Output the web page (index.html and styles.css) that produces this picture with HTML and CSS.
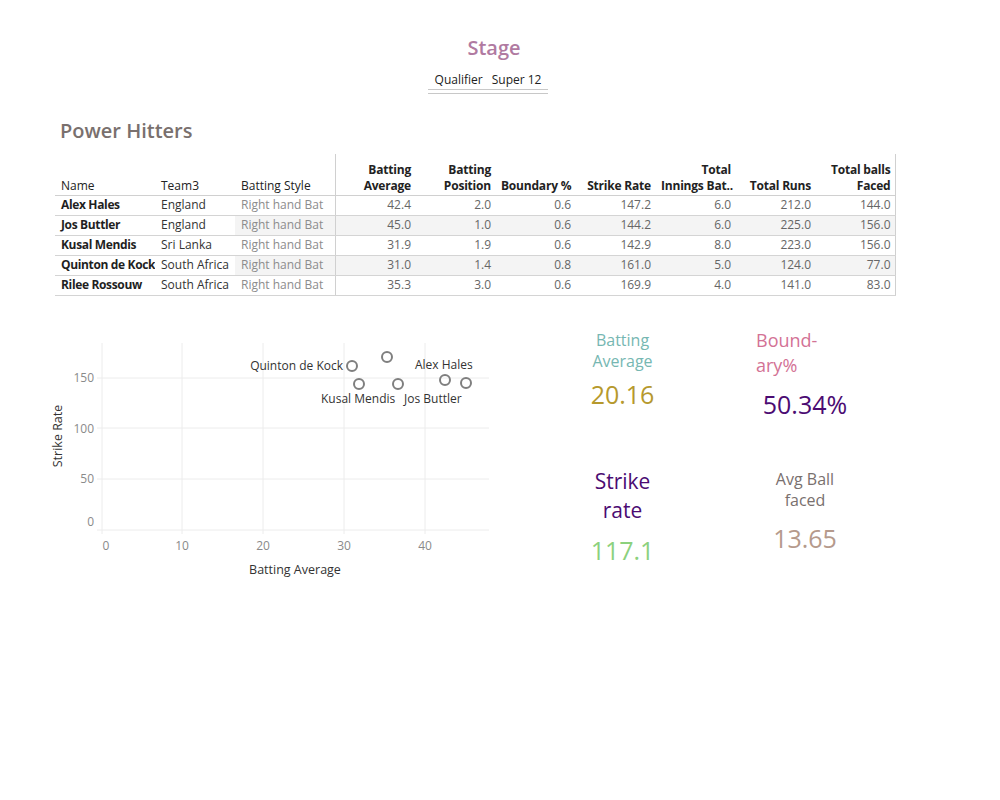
FILE: index.html
```html
<!DOCTYPE html>
<html>
<head>
<meta charset="utf-8">
<link rel="stylesheet" href="styles.css">
</head>
<body>
<div class="page">
  <section class="stage">
    <div class="stage-title">Stage</div>
    <div class="stage-filter">
      <div class="filter-items"><span>Qualifier</span><span>Super 12</span></div>
      <div class="filter-lines"></div>
    </div>
  </section>

  <section class="hitters">
    <h1 class="hitters-title">Power Hitters</h1>
    <table class="grid">
      <colgroup>
        <col class="c-name"><col class="c-team"><col class="c-style">
        <col class="c-num"><col class="c-num"><col class="c-num"><col class="c-num"><col class="c-num"><col class="c-num"><col class="c-num">
      </colgroup>
      <thead>
        <tr>
          <th class="dim">Name</th>
          <th class="dim">Team3</th>
          <th class="dim sep">Batting Style</th>
          <th class="num">Batting<br>Average</th>
          <th class="num">Batting<br>Position</th>
          <th class="num">Boundary %</th>
          <th class="num">Strike Rate</th>
          <th class="num">Total<br>Innings Bat..</th>
          <th class="num">Total Runs</th>
          <th class="num last">Total balls<br>Faced</th>
        </tr>
      </thead>
      <tbody>
        <tr>
          <td class="name">Alex Hales</td><td class="team">England</td><td class="style sep">Right hand Bat</td>
          <td class="num">42.4</td><td class="num">2.0</td><td class="num">0.6</td><td class="num">147.2</td><td class="num">6.0</td><td class="num">212.0</td><td class="num last">144.0</td>
        </tr>
        <tr class="alt">
          <td class="name">Jos Buttler</td><td class="team">England</td><td class="style sep">Right hand Bat</td>
          <td class="num">45.0</td><td class="num">1.0</td><td class="num">0.6</td><td class="num">144.2</td><td class="num">6.0</td><td class="num">225.0</td><td class="num last">156.0</td>
        </tr>
        <tr>
          <td class="name">Kusal Mendis</td><td class="team">Sri Lanka</td><td class="style sep">Right hand Bat</td>
          <td class="num">31.9</td><td class="num">1.9</td><td class="num">0.6</td><td class="num">142.9</td><td class="num">8.0</td><td class="num">223.0</td><td class="num last">156.0</td>
        </tr>
        <tr class="alt">
          <td class="name">Quinton de Kock</td><td class="team">South Africa</td><td class="style sep">Right hand Bat</td>
          <td class="num">31.0</td><td class="num">1.4</td><td class="num">0.8</td><td class="num">161.0</td><td class="num">5.0</td><td class="num">124.0</td><td class="num last">77.0</td>
        </tr>
        <tr>
          <td class="name">Rilee Rossouw</td><td class="team">South Africa</td><td class="style sep">Right hand Bat</td>
          <td class="num">35.3</td><td class="num">3.0</td><td class="num">0.6</td><td class="num">169.9</td><td class="num">4.0</td><td class="num">141.0</td><td class="num last">83.0</td>
        </tr>
      </tbody>
    </table>
  </section>

  <section class="bottom">
    <svg class="scatter" width="460" height="250" viewBox="0 0 460 250">
      <g class="gridlines">
        <line x1="57" y1="42" x2="449" y2="42"/>
        <line x1="57" y1="92" x2="449" y2="92"/>
        <line x1="57" y1="143" x2="449" y2="143"/>
        <line x1="57" y1="194" x2="449" y2="194"/>
        <line x1="62" y1="7" x2="62" y2="198"/>
        <line x1="142" y1="7" x2="142" y2="198"/>
        <line x1="223" y1="7" x2="223" y2="198"/>
        <line x1="304" y1="7" x2="304" y2="198"/>
        <line x1="385" y1="7" x2="385" y2="198"/>
      </g>
      <g class="ticks-y">
        <text x="54" y="46">150</text>
        <text x="54" y="97">100</text>
        <text x="54" y="147">50</text>
        <text x="54" y="190">0</text>
      </g>
      <g class="ticks-x">
        <text x="66" y="214">0</text>
        <text x="142" y="214">10</text>
        <text x="223" y="214">20</text>
        <text x="304" y="214">30</text>
        <text x="385" y="214">40</text>
      </g>
      <text class="axis-title" x="255" y="238">Batting Average</text>
      <text class="axis-title" transform="translate(22,100) rotate(-90)">Strike Rate</text>
      <g class="marks">
        <circle cx="312" cy="30" r="5"/>
        <circle cx="347" cy="21" r="5"/>
        <circle cx="319" cy="48" r="5"/>
        <circle cx="358" cy="48" r="5"/>
        <circle cx="405" cy="44" r="5"/>
        <circle cx="426" cy="47" r="5"/>
      </g>
      <g class="labels">
        <text class="end" x="303" y="34">Quinton de Kock</text>
        <text x="375" y="33">Alex Hales</text>
        <text x="281" y="67">Kusal Mendis</text>
        <text x="364" y="67">Jos Buttler</text>
      </g>
    </svg>

    <div class="kpis">
      <div class="kpi kpi-avg">
        <div class="kpi-label">Batting<br>Average</div>
        <div class="kpi-value">20.16</div>
      </div>
      <div class="kpi kpi-boundary">
        <div class="kpi-label">Bound-<br>ary%</div>
        <div class="kpi-value">50.34%</div>
      </div>
      <div class="kpi kpi-strike">
        <div class="kpi-label">Strike<br>rate</div>
        <div class="kpi-value">117.1</div>
      </div>
      <div class="kpi kpi-balls">
        <div class="kpi-label">Avg Ball<br>faced</div>
        <div class="kpi-value">13.65</div>
      </div>
    </div>
  </section>
</div>
</body>
</html>
```

FILE: styles.css
```css
* { box-sizing: border-box; }
html, body { margin: 0; padding: 0; background: #ffffff; }
body {
  font-family: "Open Sans", "Noto Sans", "DejaVu Sans", sans-serif;
  color: #333333;
  width: 1000px;
  height: 800px;
}

.page { padding-top: 35px; }

/* Stage filter */
.stage {
  display: flex;
  flex-direction: column;
  align-items: center;
}
.stage-title {
  font-size: 20px;
  line-height: 26px;
  color: #b07aa1;
  font-weight: 600;
  margin-left: -12px;
}
.stage-filter {
  margin-top: 11px;
  width: 120px;
  margin-left: -24px;
}
.filter-items {
  display: flex;
  justify-content: center;
  gap: 9px;
  font-size: 12px;
  line-height: 16px;
  color: #222222;
}
.filter-lines {
  margin-top: 1px;
  height: 5px;
  border-top: 1px solid #c8c8c8;
  border-bottom: 1px solid #c8c8c8;
}

/* Power hitters */
.hitters { padding-left: 55px; margin-top: 24px; }
.hitters-title {
  margin: 0 0 10px 5px;
  font-size: 20px;
  line-height: 26px;
  font-weight: 600;
  color: #79706e;
}
.grid {
  border-collapse: collapse;
  table-layout: fixed;
  width: 840px;
  font-size: 12px;
}
.c-name { width: 100px; }
.c-team { width: 80px; }
.c-style { width: 100px; }
.c-num { width: 80px; }

.grid th {
  height: 41px;
  padding: 0 4px 1px 6px;
  vertical-align: bottom;
  font-weight: 700;
  letter-spacing: -0.2px;
  line-height: 16px;
  color: #222222;
  text-align: left;
  border-bottom: 1px solid #d0d0d0;
  white-space: nowrap;
}
.grid th.dim { font-weight: 400; letter-spacing: 0; color: #222222; }
.grid th.num { text-align: right; }
.grid td {
  height: 20px;
  padding: 0 4px 1px 6px;
  line-height: 18px;
  border-bottom: 1px solid #d4d4d4;
  white-space: nowrap;
  overflow: hidden;
}
.grid .sep { border-right: 1px solid #d0d0d0; }
.grid .last { border-right: 1px solid #d0d0d0; }
.grid td.name { font-weight: 700; letter-spacing: -0.35px; color: #1f1f1f; }
.grid td.team { color: #333333; }
.grid td.style { color: #8c8c8c; }
.grid td.num { text-align: right; color: #666666; }
.grid tr.alt td.style,
.grid tr.alt td.num { background: #f4f4f4; }

/* Bottom area */
.bottom {
  display: flex;
  margin-top: 40px;
  padding-left: 40px;
}
.scatter { display: block; flex: none; }
.gridlines line { stroke: #ececec; stroke-width: 1; }
.ticks-y text { font-size: 12px; fill: #8a8a8a; text-anchor: end; }
.ticks-x text { font-size: 12px; fill: #8a8a8a; text-anchor: middle; }
.axis-title { font-size: 12.5px; fill: #333333; text-anchor: middle; }
.marks circle { fill: none; stroke: #7f7f7f; stroke-width: 2; }
.labels text { font-size: 12px; fill: #333333; }
.labels text.end { text-anchor: end; }

.kpis {
  margin-left: 70px;
  display: grid;
  grid-template-columns: 105px 75px 110px;
  grid-template-rows: 135px auto;
  margin-top: -10px;
}
.kpi { text-align: center; }
.kpi-label { white-space: nowrap; }
.kpi-value { font-size: 25px; line-height: 30px; white-space: nowrap; }

.kpi-avg { grid-column: 1; grid-row: 1; padding-top: 4px; }
.kpi-avg .kpi-label { font-size: 16px; line-height: 21px; color: #76b7b2; }
.kpi-avg .kpi-value { margin-top: 7px; color: #b6992d; }

.kpi-boundary { grid-column: 3; grid-row: 1; padding-top: 2px; }
.kpi-boundary .kpi-label { font-size: 18px; line-height: 25px; color: #d37295; text-align: left; padding-left: 6px; }
.kpi-boundary .kpi-value { margin-top: 11px; color: #4b0b72; }

.kpi-strike { grid-column: 1; grid-row: 2; padding-top: 6px; }
.kpi-strike .kpi-label { font-size: 21px; line-height: 29px; color: #4b0b72; }
.kpi-strike .kpi-value { margin-top: 10px; color: #8cd17d; }

.kpi-balls { grid-column: 3; grid-row: 2; padding-top: 8px; }
.kpi-balls .kpi-label { font-size: 16px; line-height: 21px; color: #79706e; }
.kpi-balls .kpi-value { margin-top: 12px; color: #b59a8c; }
```
